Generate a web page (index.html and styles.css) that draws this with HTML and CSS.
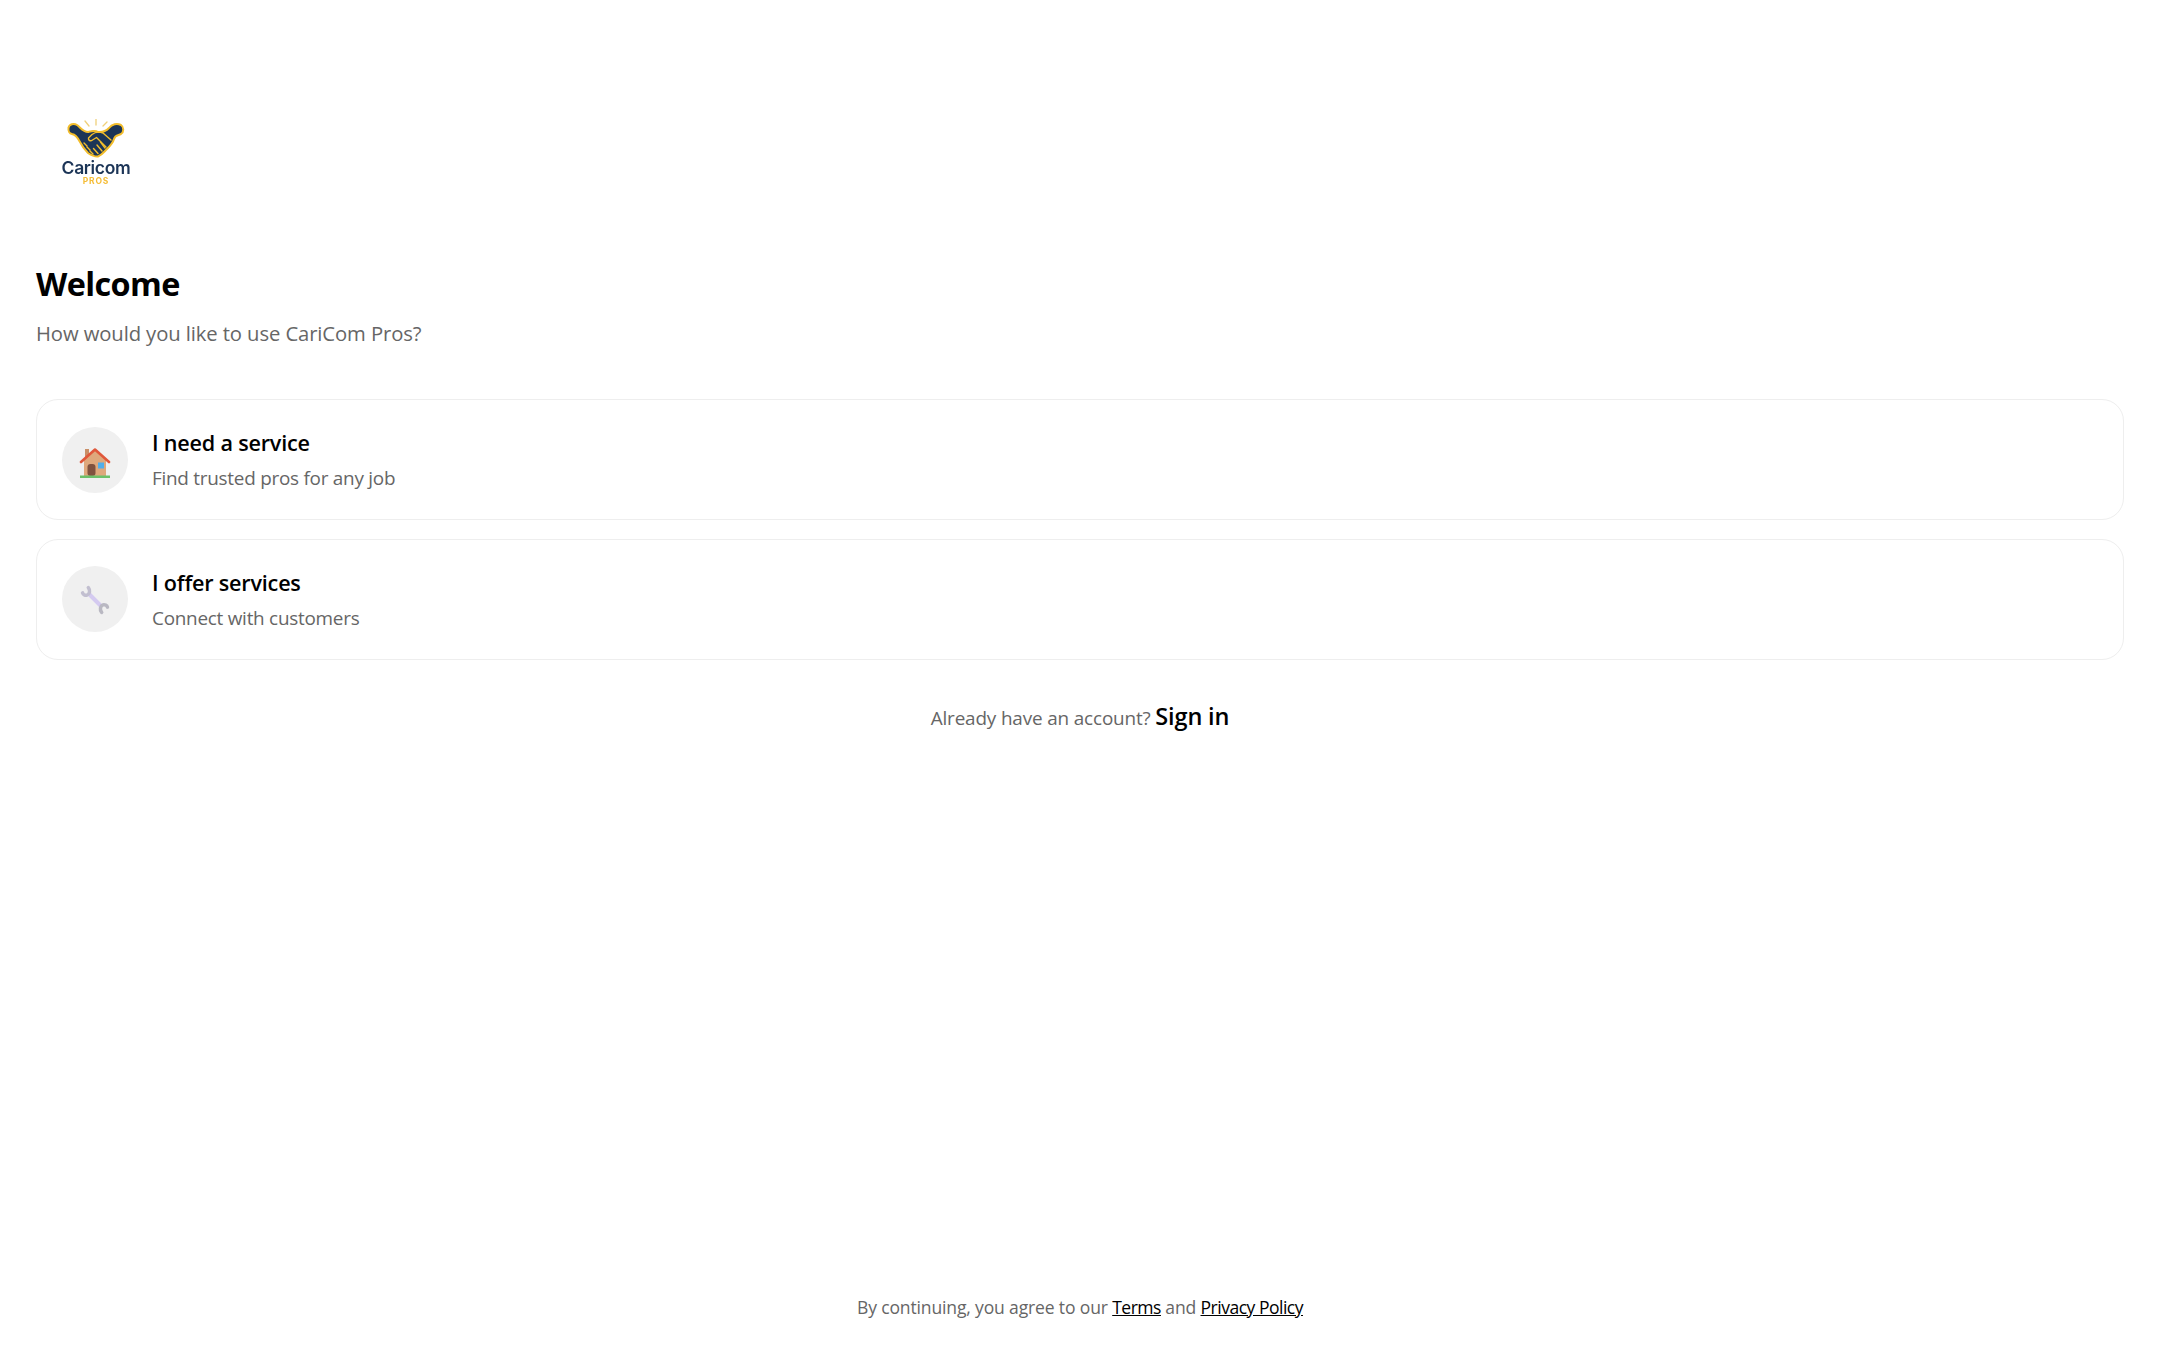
FILE: index.html
```html
<!DOCTYPE html>
<html lang="en">
<head>
<meta charset="utf-8">
<title>CariCom Pros</title>
<link rel="stylesheet" href="styles.css">
</head>
<body>
<main class="page">
  <div class="logo">
    <svg class="logo-mark" viewBox="0 0 58 40" width="58" height="40" aria-hidden="true">
      <g stroke="#efd07a" stroke-width="1.300" stroke-linecap="round" fill="none">
        <path d="M29 0V6M18 2L22 7M40 3L36 7"/>
      </g>
      <path d="M1.500 9C2 5 7 4 10 6C14 9 16 12.500 21 13C25 12 28 11 31 13C35 13.500 39 12 42 9C45 5 50 4 54 6C57 8 57 13 54 15C51 16.500 48 16 47 20C46 24 43 27 40 30C37 33 35 36 31 37.500C27 38 24 36 21 34C18 31 15 27 13 23C11 19 8 15.500 5 15C2.500 14.500 1 12 1.500 9Z" fill="#1c3557" stroke="#f2bd2c" stroke-width="2" stroke-linejoin="round"/>
      <g fill="none" stroke="#f2bd2c" stroke-width="1.400" stroke-linecap="round" stroke-linejoin="round">
        <path d="M44 21L36 14C32 12.500 28 13 25 15.500L21.500 19C21 21.500 23.500 22.500 25.500 21L29.500 18.500L39 28"/>
        <path d="M33.500 23L38 29M30 26L35 32M26.500 29.500L31 34.500"/>
        <path d="M17 24L20 27M20 28L23 31M23 32L26 35"/>
      </g>
    </svg>
    <div class="logo-name">Caricom</div>
    <div class="logo-pros">PROS</div>
  </div>

  <h1 class="title">Welcome</h1>
  <p class="subtitle">How would you like to use CariCom Pros?</p>

  <section class="choices">
    <a class="card" href="#">
      <span class="circle">
        <svg class="emoji emoji-house" viewBox="0 0 32 32" width="32" height="32" aria-hidden="true">
          <rect x="6" y="2" width="4" height="10" fill="#c98f68"/>
          <path d="M5 13L16 3L27 13V29H5Z" fill="#dfa87c"/>
          <rect x="8.500" y="17" width="8" height="12" rx="3" fill="#80523f"/>
          <rect x="19" y="15.500" width="6" height="6" fill="#52aeea"/>
          <path d="M2 15L16 2.500L30 15" fill="none" stroke="#e0583b" stroke-width="2.600" stroke-linecap="round" stroke-linejoin="round"/>
          <rect x="1" y="28.500" width="30" height="2.500" fill="#6cc06a"/>
        </svg>
      </span>
      <span class="card-text">
        <span class="card-title">I need a service</span>
        <span class="card-sub">Find trusted pros for any job</span>
      </span>
    </a>
    <a class="card" href="#">
      <span class="circle">
        <svg class="emoji" viewBox="-2 -2 36 36" width="32" height="32" aria-hidden="true">
          <path d="M9 9L23 23" stroke="#d4caf0" stroke-width="4.600"/>
          <path d="M8.500 2C11 5 10 9.500 7 10.500C5 11 2.500 10 2 8" fill="none" stroke="#c2bfd0" stroke-width="4" stroke-linecap="round"/>
          <path d="M23.500 30C21 27 22 22.500 25 21.500C27 21 29.500 22 30 24" fill="none" stroke="#b9b8c2" stroke-width="4" stroke-linecap="round"/>
        </svg>
      </span>
      <span class="card-text">
        <span class="card-title">I offer services</span>
        <span class="card-sub">Connect with customers</span>
      </span>
    </a>
  </section>

  <p class="signin">Already have an account? <a class="signin-link" href="#">Sign in</a></p>

  <footer class="legal">By continuing, you agree to our <a href="#">Terms</a> and <a href="#">Privacy Policy</a></footer>
</main>
</body>
</html>
```

FILE: styles.css
```css
* { box-sizing: border-box; }
html, body { margin: 0; padding: 0; background: #fff; }
body { font-family: "Open Sans", "Noto Sans", "Liberation Sans", sans-serif; color: #000; }
a { color: inherit; }

.page {
  display: flex;
  flex-direction: column;
  min-height: 1350px;
  padding: 116px 36px 0;
}

.logo {
  display: flex;
  flex-direction: column;
  align-items: center;
  width: 68px;
  margin-left: 26px;
  filter: blur(0.35px);
}
.logo-mark { display: block; margin-top: 3px; }
.logo-name {
  font-family: Inter, sans-serif;
  font-size: 17.500px;
  font-weight: 600;
  line-height: 18px;
  letter-spacing: -0.35px;
  color: #1c3557;
}
.logo-pros {
  font-family: Inter, sans-serif;
  font-size: 8.500px;
  font-weight: 700;
  line-height: 8px;
  letter-spacing: 0.8px;
  color: #f5bd37;
}

.title {
  margin: 75.500px 0 0;
  font-size: 32.400px;
  font-weight: 700;
  line-height: 44px;
  letter-spacing: -0.6px;
}
.subtitle {
  margin: 12px 0 0;
  font-size: 20.250px;
  line-height: 32px;
  color: #666;
  letter-spacing: -0.1px;
}

.choices {
  display: flex;
  flex-direction: column;
  gap: 19px;
  margin-top: 50.500px;
}
.card {
  display: flex;
  align-items: center;
  gap: 24px;
  height: 121px;
  padding: 0 25px;
  border: 1.350px solid #eee;
  border-radius: 22px;
  text-decoration: none;
}
.card + .card { margin-top: -0.500px; }
.circle {
  display: flex;
  align-items: center;
  justify-content: center;
  flex: none;
  width: 66px;
  height: 66px;
  border-radius: 50%;
  background: #f0f0f0;
}
.emoji { display: block; margin-top: 2px; filter: blur(0.3px); }
.emoji-house { transform: translateY(2px); }
.card-text { display: flex; flex-direction: column; gap: 8px; }
.card-title {
  font-size: 21.600px;
  font-weight: 600;
  line-height: 29px;
  letter-spacing: -0.2px;
}
.card-sub {
  font-size: 18.900px;
  line-height: 26px;
  color: #666;
  letter-spacing: -0.25px;
}

.signin {
  margin: 40px 0 0;
  text-align: center;
  font-size: 18.900px;
  line-height: 32px;
  color: #666;
  letter-spacing: -0.15px;
}
.signin-link {
  font-size: 23.500px;
  font-weight: 600;
  color: #000;
  text-decoration: none;
}

.legal {
  margin-top: auto;
  padding-bottom: 30px;
  text-align: center;
  font-size: 17.550px;
  line-height: 26px;
  color: #666;
  letter-spacing: -0.15px;
}
.legal a { color: #000; letter-spacing: -0.5px; }
```
